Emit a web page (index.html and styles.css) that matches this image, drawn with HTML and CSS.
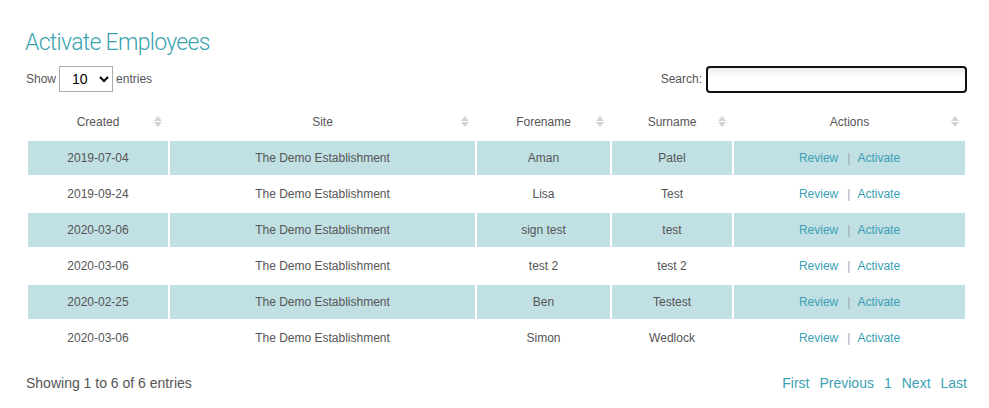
FILE: index.html
```html
<!DOCTYPE html>
<html>
  <head>
    <title>Activate Employees</title>
    <link rel="stylesheet" href="styles.css">
  </head>
  <body>
    <div class="page">
      <h1 class="page-title">Activate Employees</h1>

      <!-- Table controls -->
      <div class="table-controls">
        <label class="length-control">
          Show
          <select>
            <option>10</option>
            <option>25</option>
            <option>50</option>
            <option>100</option>
          </select>
          entries
        </label>
        <label class="search-control">
          Search:
          <input type="search" autofocus />
        </label>
      </div>

      <table class="data-table">
        <colgroup>
          <col class="col-created">
          <col class="col-site">
          <col class="col-forename">
          <col class="col-surname">
          <col class="col-actions">
        </colgroup>
        <thead>
          <tr>
            <th>Created<span class="sort"></span></th>
            <th>Site<span class="sort"></span></th>
            <th>Forename<span class="sort"></span></th>
            <th>Surname<span class="sort"></span></th>
            <th>Actions<span class="sort"></span></th>
          </tr>
        </thead>
        <tbody>
          <tr>
            <td>2019-07-04</td>
            <td>The Demo Establishment</td>
            <td>Aman</td>
            <td>Patel</td>
            <td><a href="#">Review</a><span class="sep">|</span><a href="#">Activate</a></td>
          </tr>
          <tr>
            <td>2019-09-24</td>
            <td>The Demo Establishment</td>
            <td>Lisa</td>
            <td>Test</td>
            <td><a href="#">Review</a><span class="sep">|</span><a href="#">Activate</a></td>
          </tr>
          <tr>
            <td>2020-03-06</td>
            <td>The Demo Establishment</td>
            <td>sign test</td>
            <td>test</td>
            <td><a href="#">Review</a><span class="sep">|</span><a href="#">Activate</a></td>
          </tr>
          <tr>
            <td>2020-03-06</td>
            <td>The Demo Establishment</td>
            <td>test 2</td>
            <td>test 2</td>
            <td><a href="#">Review</a><span class="sep">|</span><a href="#">Activate</a></td>
          </tr>
          <tr>
            <td>2020-02-25</td>
            <td>The Demo Establishment</td>
            <td>Ben</td>
            <td>Testest</td>
            <td><a href="#">Review</a><span class="sep">|</span><a href="#">Activate</a></td>
          </tr>
          <tr>
            <td>2020-03-06</td>
            <td>The Demo Establishment</td>
            <td>Simon</td>
            <td>Wedlock</td>
            <td><a href="#">Review</a><span class="sep">|</span><a href="#">Activate</a></td>
          </tr>
        </tbody>
      </table>

      <!-- Footer with info and paging -->
      <div class="table-footer">
        <div class="table-info">Showing 1 to 6 of 6 entries</div>
        <div class="pagination">
          <a href="#">First</a>
          <a href="#">Previous</a>
          <a href="#">1</a>
          <a href="#">Next</a>
          <a href="#">Last</a>
        </div>
      </div>
    </div>
  </body>
</html>
```

FILE: styles.css
```css
:root {
  --teal: #3aa3ae;
  --link: #3c9fb4;
  --text: #555;
  --stripe: #c0e0e3;
}

* {
  margin: 0;
  padding: 0;
  box-sizing: border-box;
}

body {
  font-family: "Liberation Sans", Arial, Helvetica, sans-serif;
  color: var(--text);
  background: #fff;
}

a {
  color: var(--link);
  text-decoration: none;
}

.page {
  padding: 29px 22px 0 26px;
}

.page-title {
  font-family: Roboto, "Liberation Sans", Arial, sans-serif;
  font-size: 23px;
  line-height: 28px;
  font-weight: 300;
  letter-spacing: -0.7px;
  color: var(--teal);
  margin-left: -1px;
}

/* Controls row */
.table-controls {
  display: flex;
  justify-content: space-between;
  align-items: center;
  margin-top: 8px;
  height: 28px;
  font-size: 12px;
}

.length-control {
  display: flex;
  align-items: center;
  gap: 3px;
}

.length-control select {
  width: 54px;
  height: 26px;
  padding: 0 4px 0 8px;
  border: 1px solid #aaa;
  border-radius: 0;
  background: #fff;
  color: #000;
  font-family: inherit;
  font-size: 14px;
}

.search-control {
  display: flex;
  align-items: center;
  gap: 4px;
}

.search-control input {
  width: 261px;
  height: 27px;
  padding: 0 5px;
  border: 2px solid #111;
  border-radius: 4px;
  background: linear-gradient(#ececec, #fff 45%);
  font-family: inherit;
  font-size: 14px;
  outline: none;
}

/* Table */
.data-table {
  width: 100%;
  margin-top: 10px;
  border-collapse: separate;
  border-spacing: 2px;
  font-size: 12px;
  table-layout: fixed;
}

.col-created { width: 140px; }
.col-site { width: 305px; }
.col-forename { width: 133px; }
.col-surname { width: 120px; }

.data-table th {
  position: relative;
  height: 34px;
  padding: 0 10px;
  font-weight: normal;
  color: #555;
  text-align: center;
}

.data-table td {
  height: 34px;
  padding: 0 10px;
  text-align: center;
}

.data-table tbody tr:nth-child(odd) td {
  background: var(--stripe);
}

.sep {
  color: #9aa8b0;
  margin: 0 7px 0 9px;
}

/* Sort arrows */
.sort {
  position: absolute;
  right: 6px;
  top: 11px;
  width: 8px;
  height: 11px;
}

.sort::before,
.sort::after {
  content: "";
  position: absolute;
  left: 0;
  border-left: 4px solid transparent;
  border-right: 4px solid transparent;
}

.sort::before {
  top: 0;
  border-bottom: 5px solid #d3d3d3;
}

.sort::after {
  bottom: 0;
  border-top: 5px solid #d3d3d3;
}

/* Footer */
.table-footer {
  display: flex;
  justify-content: space-between;
  align-items: center;
  margin-top: 16px;
  font-size: 14px;
  line-height: 20px;
}

.pagination {
  display: flex;
  gap: 10px;
}
```
